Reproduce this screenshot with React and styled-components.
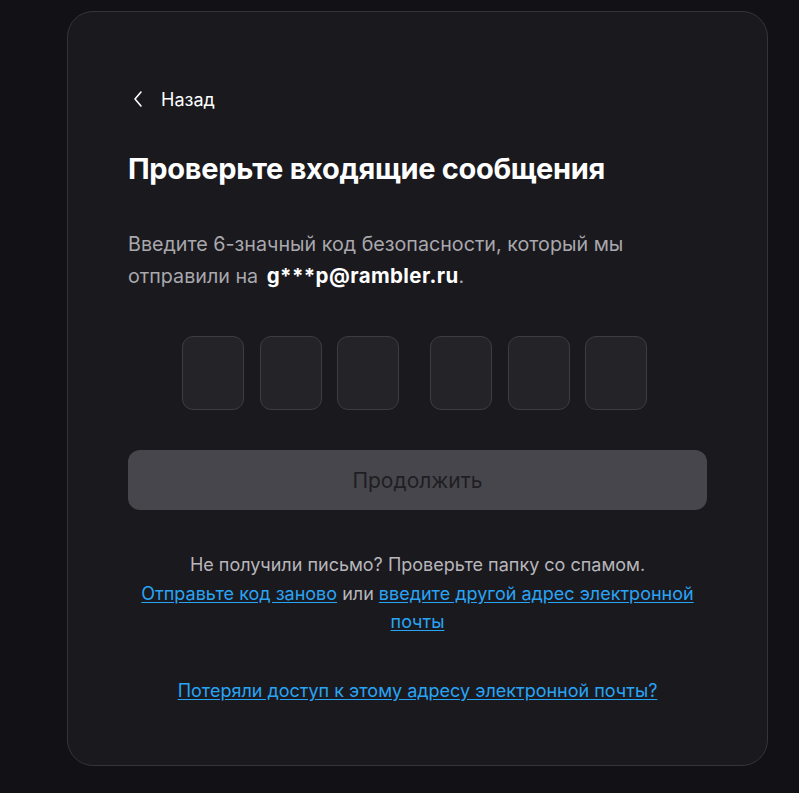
import { createGlobalStyle, styled } from "styled-components";

const GlobalStyle = createGlobalStyle`
  html, body {
    margin: 0;
    background: #111116;
    font-family: Inter, "Noto Sans", sans-serif;
  }
  * { box-sizing: border-box; }
`;

const Page = styled.div`
  min-height: 100vh;
  padding: 11px 31px 27px 67px;
`;

const Card = styled.div`
  width: 701px;
  height: 755px;
  background: #1a191e;
  border: 1px solid #35343a;
  border-radius: 26px;
  padding: 75px 60px 0 60px;
  display: flex;
  flex-direction: column;
`;

const BackLink = styled.a`
  display: flex;
  align-items: center;
  gap: 17px;
  height: 24px;
  margin-left: 4px;
  color: #ffffff;
  font-size: 18px;
  text-decoration: none;
  cursor: pointer;
`;

const Title = styled.h1`
  margin: 40px 0 0;
  font-size: 29px;
  line-height: 36px;
  font-weight: 700;
  letter-spacing: -0.3px;
  color: #ffffff;
`;

const Description = styled.p`
  margin: 41px 0 0;
  font-size: 19.7px;
  line-height: 32px;
  color: #a9a8ad;

  & b {
    display: inline-block;
    margin-left: 3px;
    color: #ffffff;
    font-weight: 700;
    font-size: 20.5px;
    letter-spacing: 0.4px;
  }
`;

const CodeRow = styled.div`
  display: flex;
  justify-content: center;
  gap: 31px;
  margin-top: 44px;
  padding-right: 6px;
`;

const CodeGroup = styled.div`
  display: flex;
  gap: 15.5px;
`;

const CodeBox = styled.input`
  width: 62px;
  height: 74px;
  background: #242328;
  border: 1px solid #3d3c42;
  border-radius: 11px;
  color: #fff;
  font-size: 24px;
  text-align: center;
  outline: none;
`;

const Submit = styled.button`
  margin-top: 40px;
  height: 60px;
  width: 100%;
  border: none;
  border-radius: 12px;
  background: #47464c;
  color: #1f1e23;
  font-family: inherit;
  font-size: 21px;
`;

const Footer = styled.div`
  margin-top: 41px;
  text-align: center;
  font-size: 18px;
  line-height: 28.5px;
  color: #b7b6bb;
`;

const Link = styled.a`
  color: #29a4f5;
  text-decoration: underline;
  text-underline-offset: 2px;
  cursor: pointer;
`;

const LostAccess = styled.div`
  margin-top: 40px;
  text-align: center;
  font-size: 18px;
  line-height: 28px;
`;

const ChevronLeft = () => (
  <svg width="12" height="18" viewBox="0 0 12 18" fill="none">
    <path d="M9 2 L3 9 L9 16" stroke="#fff" strokeWidth="1.6" strokeLinecap="round" strokeLinejoin="round" />
  </svg>
);

export default function App() {
  return (
    <>
      <GlobalStyle />
      <Page>
        <Card>
          <BackLink>
            <ChevronLeft />
            Назад
          </BackLink>
          <Title>Проверьте входящие сообщения</Title>
          <Description>
            Введите 6-значный код безопасности, который мы отправили на{" "}
            <b>g***p@rambler.ru</b>.
          </Description>
          <CodeRow>
            <CodeGroup>
              <CodeBox />
              <CodeBox />
              <CodeBox />
            </CodeGroup>
            <CodeGroup>
              <CodeBox />
              <CodeBox />
              <CodeBox />
            </CodeGroup>
          </CodeRow>
          <Submit disabled>Продолжить</Submit>
          <Footer>
            Не получили письмо? Проверьте папку со спамом.
            <br />
            <Link>Отправьте код заново</Link> или{" "}
            <Link>введите другой адрес электронной почты</Link>
          </Footer>
          <LostAccess>
            <Link>Потеряли доступ к этому адресу электронной почты?</Link>
          </LostAccess>
        </Card>
      </Page>
    </>
  );
}
